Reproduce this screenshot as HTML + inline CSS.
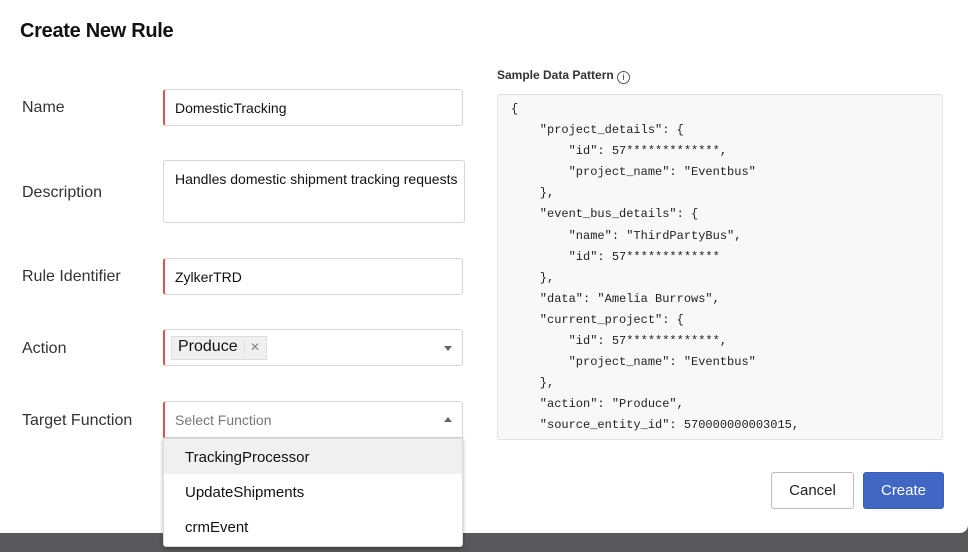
<!DOCTYPE html>
<html><head><style>
*{box-sizing:border-box;margin:0;padding:0}
body{width:968px;height:552px;background:#58585a;position:relative;overflow:hidden;font-family:"Liberation Sans",sans-serif;color:#222}
.modal{position:absolute;left:0;top:0;width:968px;height:533px;background:#fff;border-radius:0 0 8px 0}
h1{position:absolute;left:20px;top:20px;font-size:20px;font-weight:bold;color:#111;letter-spacing:-0.3px}
.lbl{position:absolute;left:22px;font-size:16px;color:#333}
.inp{position:absolute;left:163px;width:300px;height:37px;border:1px solid #d6d6d8;border-left:2px solid #d9534f;border-radius:3px;font-size:14px;padding:10px 0 0 10px;color:#111}
.arrow{position:absolute;right:10px;top:16px;width:0;height:0;border-left:4px solid transparent;border-right:4px solid transparent;border-top:5px solid #666}
.up{border-top:none;border-bottom:5px solid #666;top:15px}
.dd{position:absolute;left:163px;top:438px;width:300px;height:109px;background:#fff;border:1px solid #ddd;box-shadow:0 2px 4px rgba(0,0,0,.3);border-radius:0 0 3px 3px}
.dd div{height:35px;padding:10px 0 0 21px;font-size:15px;color:#111}
.code{position:absolute;left:497px;top:94px;width:446px;height:346px;background:#f8f8f8;border:1px solid #e2e2e2;border-radius:3px;overflow:hidden}
pre{position:absolute;left:13px;top:4px;font-family:"Liberation Mono",monospace;font-size:12px;line-height:21.1px;color:#222}
.btn{position:absolute;top:472px;height:37px;border-radius:3px;font-size:15px;text-align:center;padding-top:9px}
</style></head><body>
<div class="modal">
<h1>Create New Rule</h1>
<div class="lbl" style="top:99px">Name</div>
<div class="inp" style="top:89px">DomesticTracking</div>
<div class="lbl" style="top:184px">Description</div>
<div class="inp" style="top:160px;height:63px;border-left:1px solid #d6d6d8;padding-left:11px;width:302px">Handles domestic shipment tracking requests</div>
<div class="lbl" style="top:268px">Rule Identifier</div>
<div class="inp" style="top:258px">ZylkerTRD</div>
<div class="lbl" style="top:340px">Action</div>
<div class="inp" style="top:329px;padding:6px 0 0 6px"><span style="display:inline-block;background:#f0f0f0;border:1px solid #ddd;font-size:16px;padding:1px 6px 1px 6px;height:24px">Produce <span style="color:#888;font-size:12px;border-left:1px solid #ddd;padding-left:5px;margin-left:2px">✕</span></span><div class="arrow"></div></div>
<div class="lbl" style="top:412px">Target Function</div>
<div class="inp" style="top:401px;color:#777;border-radius:3px 3px 0 0">Select Function<div class="arrow up"></div></div>
<div class="dd"><div style="background:#f0f0f0">TrackingProcessor</div><div>UpdateShipments</div><div>crmEvent</div></div>
<div style="position:absolute;left:497px;top:68px;font-size:12px;font-weight:bold;color:#333">Sample Data Pattern <span style="display:inline-block;width:13px;height:13px;border:1px solid #555;border-radius:50%;font-size:9px;text-align:center;line-height:11px;font-weight:normal;vertical-align:-1px">i</span></div>
<div class="code"><pre>{
    "project_details": {
        "id": 57*************,
        "project_name": "Eventbus"
    },
    "event_bus_details": {
        "name": "ThirdPartyBus",
        "id": 57*************
    },
    "data": "Amelia Burrows",
    "current_project": {
        "id": 57*************,
        "project_name": "Eventbus"
    },
    "action": "Produce",
    "source_entity_id": 570000000003015,</pre></div>
<div class="btn" style="left:771px;width:83px;border:1px solid #bbb;color:#222">Cancel</div>
<div class="btn" style="left:863px;width:81px;background:#3f67c3;border:1px solid #3560bb;color:#fff">Create</div>
</div>
</body></html>
